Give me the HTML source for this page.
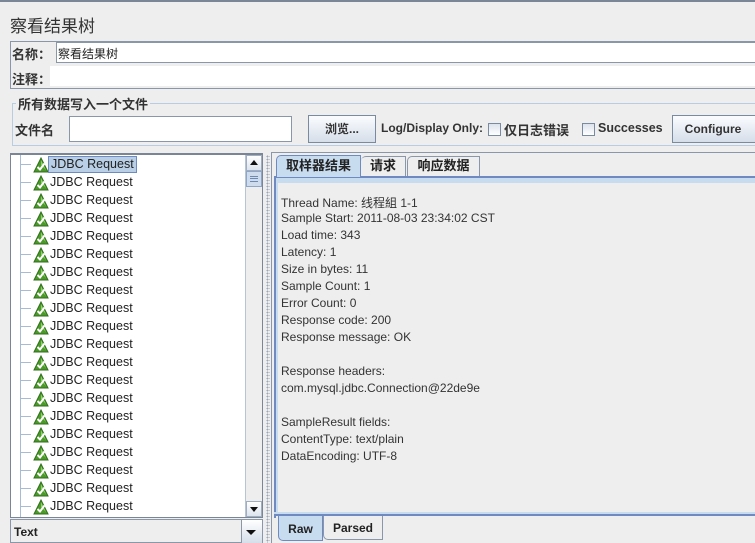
<!DOCTYPE html>
<html style="width:755px;height:543px;overflow:hidden"><head><meta charset="utf-8"><style>
*{box-sizing:border-box;margin:0;padding:0}
body{width:755px;height:543px;overflow:hidden;background:#eeeeee;position:relative;font-family:"Liberation Sans","Noto Sans CJK SC",sans-serif;font-size:12px;color:#333}
.a{position:absolute}
.b{font-weight:bold}
.inp{position:absolute;background:#fff;border:1px solid #8a97a8;border-right:none}
.btn{position:absolute;border:1px solid #7a8aa0;background:linear-gradient(#fbfcfe,#d5deea);font-weight:bold;text-align:center;color:#333}
.cb{position:absolute;width:13px;height:13px;border:1px solid #7a8aa0;background:linear-gradient(#dce3ec,#fff)}
.row{position:absolute;left:0;height:18px;width:230px}
.row .h{position:absolute;left:10px;top:8px;width:10px;height:1px;background:#a8bbd4}
.row svg{position:absolute;left:22px;top:1px}
.row span{position:absolute;left:37px;top:1px;font-size:12.5px;color:#222;padding:0 2px;line-height:15px}
.tl{position:absolute;left:281px;font-size:12px;color:#333}
</style></head><body>
<div class="a" style="left:0;top:0;width:755px;height:2px;background:#7a8595"></div>
<div class="a" style="left:10px;top:12px;font-size:17px;color:#333">察看结果树</div>
<div class="a" style="left:10px;top:41px;width:750px;height:48px;border:1px solid #8a97a8"></div>
<div class="a b" style="left:12px;top:44px;font-size:13px">名称：</div>
<div class="inp" style="left:56px;top:42px;width:700px;height:21px"></div>
<div class="a" style="left:58px;top:45px;color:#222">察看结果树</div>
<div class="a b" style="left:12px;top:69px;font-size:13px">注释：</div>
<div class="a" style="left:50px;top:66px;width:706px;height:20px;background:#fff"></div>
<div class="a" style="left:12px;top:103px;width:750px;height:43px;border:1px solid #b8cde4"></div>
<div class="a b" style="left:16px;top:94px;background:#eee;padding:0 2px;font-size:13px">所有数据写入一个文件</div>
<div class="a b" style="left:15px;top:120px;font-size:13px">文件名</div>
<div class="inp" style="left:69px;top:116px;width:223px;height:26px;border-right:1px solid #8a97a8"></div>
<div class="btn" style="left:308px;top:115px;width:68px;height:28px;line-height:26px">浏览...</div>
<div class="a b" style="left:381px;top:121px">Log/Display Only:</div>
<div class="cb" style="left:488px;top:123px"></div>
<div class="a b" style="left:504px;top:120px;font-size:13px">仅日志错误</div>
<div class="cb" style="left:582px;top:123px"></div>
<div class="a b" style="left:598px;top:121px;font-size:12.5px">Successes</div>
<div class="btn" style="left:672px;top:115px;width:90px;height:28px;line-height:26px;padding-right:8px">Configure</div>

<div class="a" style="left:10px;top:153px;width:253px;height:365px;border:1px solid #7a8595;border-top-width:2px;background:#fff;overflow:hidden">
 <div class="a" style="left:9px;top:0;width:1px;height:365px;background:#a8bbd4"></div>
 <div id="rows"></div>
 <div class="a" style="left:234px;top:0;width:17px;height:363px;background:#eee;border-left:1px solid #b8c4d4"></div>
 <div class="a" style="left:235px;top:0;width:16px;height:16px;background:linear-gradient(#fff,#dde4ee);border:1px solid #a0aec0"></div>
 <div class="a" style="left:239px;top:5px;width:0;height:0;border-left:4px solid transparent;border-right:4px solid transparent;border-bottom:5px solid #111"></div>
 <div class="a" style="left:235px;top:16px;width:16px;height:16px;background:#cfdcee;border:1px solid #8fa6c6"></div>
 <div class="a" style="left:239px;top:21px;width:8px;height:6px;border-top:1px solid #6f8ab0;border-bottom:1px solid #6f8ab0"></div>
 <div class="a" style="left:239px;top:23px;width:8px;height:1px;background:#6f8ab0"></div>
 <div class="a" style="left:235px;top:346px;width:16px;height:16px;background:linear-gradient(#fff,#dde4ee);border:1px solid #a0aec0"></div>
 <div class="a" style="left:239px;top:352px;width:0;height:0;border-left:4px solid transparent;border-right:4px solid transparent;border-top:5px solid #111"></div>
</div>
<div class="a" style="left:10px;top:519px;width:253px;height:24px;border:1px solid #8a97a8;background:#eeeeee"></div>
<div class="a b" style="left:14px;top:525px;color:#222">Text</div>
<div class="a" style="left:241px;top:520px;width:21px;height:23px;background:linear-gradient(#fff,#d5deea);border-left:1px solid #8a97a8"></div>
<div class="a" style="left:246px;top:530px;width:0;height:0;border-left:5px solid transparent;border-right:5px solid transparent;border-top:5px solid #111"></div>

<div class="a" style="left:266px;top:155px;width:4px;height:388px;background-image:radial-gradient(#9aa6b6 0.8px,transparent 1px);background-size:3px 3px"></div>

<div class="a" style="left:271px;top:152px;width:484px;height:391px;border-left:1px solid #8a97a8;border-top:1px solid #8a97a8"></div>
<div class="a" style="left:274px;top:176px;width:481px;height:2px;background:#6f8ac0"></div>
<div class="a" style="left:274px;top:178px;width:481px;height:5px;background:#c8dcf0"></div>
<div class="a" style="left:274px;top:176px;width:2px;height:342px;background:#6f8ac0"></div>
<div class="a" style="left:276px;top:183px;width:2px;height:330px;background:#c8dcf0"></div>
<div class="a" style="left:274px;top:512px;width:481px;height:2px;background:#c8dcf0"></div>
<div class="a" style="left:274px;top:514px;width:481px;height:2px;background:#6f8ac0"></div>
<div class="a b" style="left:276px;top:155px;width:85px;height:22px;background:#c8dcf0;border:1px solid #6f8ac0;border-bottom:none;border-radius:5px 0 0 0;line-height:20px;text-align:center;color:#222;font-size:13px">取样器结果</div>
<div class="a b" style="left:361px;top:156px;width:45px;height:20px;border:1px solid #8a97a8;border-bottom:none;border-radius:5px 0 0 0;border-left:none;line-height:18px;text-align:center;color:#222;font-size:13px">请求</div>
<div class="a b" style="left:407px;top:156px;width:73px;height:20px;border:1px solid #8a97a8;border-bottom:none;border-radius:5px 0 0 0;line-height:18px;text-align:center;color:#222;font-size:13px">响应数据</div>
<div class="a b" style="left:278px;top:516px;width:45px;height:25px;background:#c8dcf0;border:1px solid #6f8ac0;border-top:none;border-radius:0 0 0 5px;line-height:26px;text-align:center;color:#222">Raw</div>
<div class="a b" style="left:323px;top:516px;width:60px;height:24px;border:1px solid #8a97a8;border-top:none;border-radius:0 0 0 5px;line-height:25px;text-align:center;color:#222">Parsed</div>

<div class="tl" style="top:194px">Thread Name: 线程組 1-1</div>
<div class="tl" style="top:211px">Sample Start: 2011-08-03 23:34:02 CST</div>
<div class="tl" style="top:228px">Load time: 343</div>
<div class="tl" style="top:245px">Latency: 1</div>
<div class="tl" style="top:262px">Size in bytes: 11</div>
<div class="tl" style="top:279px">Sample Count: 1</div>
<div class="tl" style="top:296px">Error Count: 0</div>
<div class="tl" style="top:313px">Response code: 200</div>
<div class="tl" style="top:330px">Response message: OK</div>
<div class="tl" style="top:364px">Response headers:</div>
<div class="tl" style="top:381px">com.mysql.jdbc.Connection@22de9e</div>
<div class="tl" style="top:415px">SampleResult fields:</div>
<div class="tl" style="top:432px">ContentType: text/plain</div>
<div class="tl" style="top:449px">DataEncoding: UTF-8</div>

<script>
var h='';
for(var i=0;i<20;i++){
 h+='<div class="row" style="top:'+(1+i*18)+'px"><div class="h"></div><svg width="16" height="16" viewBox="0 0 16 16"><path d="M8 1 L15 15 L1 15 Z" fill="#4c9a2a" stroke="#2f6e1a" stroke-width="1"/><path d="M8 3 L13 13 L8 8 Z" fill="#8fd06a"/><path d="M4.5 10 L7 12.5 L11.5 6.5" fill="none" stroke="#fff" stroke-width="2"/></svg><span'+(i==0?' style="background:#b8cfe5;border:1px solid #6f8ac0;top:0"':'')+'>JDBC Request</span></div>';
}
document.getElementById('rows').innerHTML=h;
</script>
</body></html>
